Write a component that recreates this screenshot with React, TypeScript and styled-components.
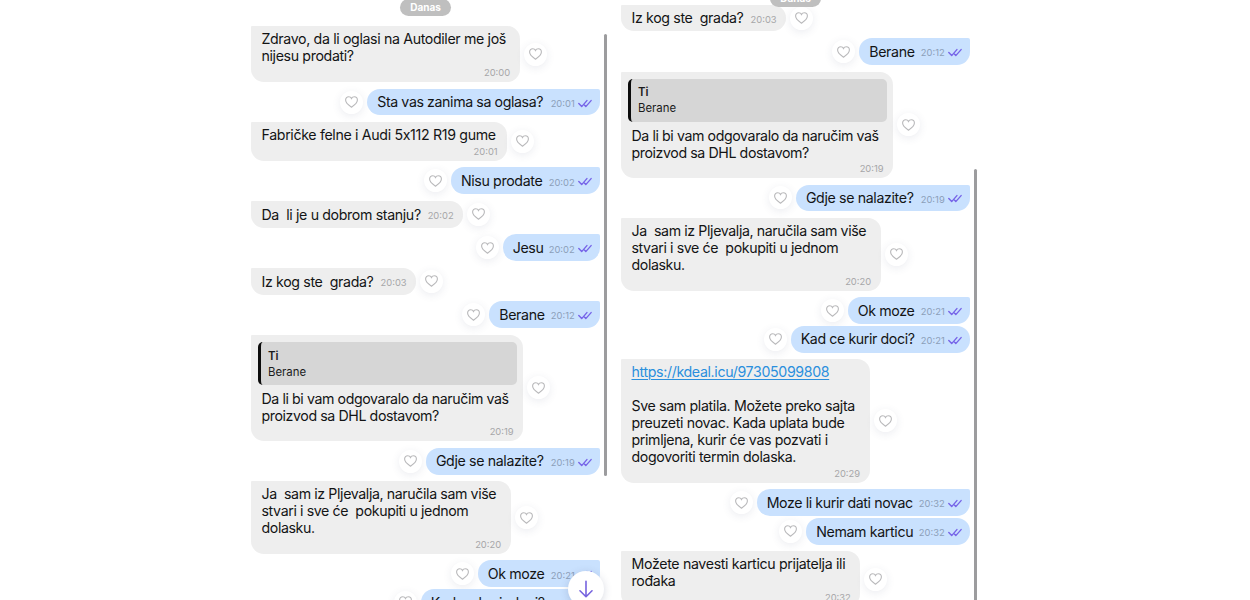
import React from 'react'
import styled, { createGlobalStyle } from 'styled-components'

type Message = {
  lines: string[]
  time: string
  width: number
  height?: number
  own?: boolean
  grouped?: boolean
  stacked?: boolean
  quote?: { author: string; text: string }
  link?: string
  spacing?: number
}

const GlobalStyle = createGlobalStyle`
  * {
    box-sizing: border-box;
  }

  body {
    margin: 0;
    overflow: hidden;
    background: #ffffff;
    font-family: Inter, 'Liberation Sans', sans-serif;
  }
`

const Page = styled.main`
  display: flex;
  justify-content: center;
  gap: 1px;
  width: 1250px;
  height: 600px;
  padding-right: 19px;
  overflow: hidden;
`

const Panel = styled.section`
  position: relative;
  width: 369px;
  height: 600px;
  padding: 0 15.3px 0 5.3px;
  overflow: hidden;
`

const Thread = styled.div<{ $offset: number }>`
  display: flex;
  flex-direction: column;
  margin-top: ${({ $offset }) => $offset}px;
`

const DayBadge = styled.div<{ $top: number }>`
  position: absolute;
  z-index: 1;
  top: ${({ $top }) => $top}px;
  left: 154px;
  width: 51px;
  height: 17px;
  border-radius: 9px;
  background: #bfbfbf;
  color: #ffffff;
  font-size: 10px;
  font-weight: 700;
  line-height: 17px;
  text-align: center;
`

const Scrollbar = styled.div<{ $top: number; $height: number }>`
  position: absolute;
  top: ${({ $top }) => $top}px;
  right: 8px;
  width: 3px;
  height: ${({ $height }) => $height}px;
  border-radius: 2px;
  background: #9c9c9e;
`

const Row = styled.div<{ $own?: boolean; $grouped?: boolean }>`
  display: flex;
  flex-direction: ${({ $own }) => ($own ? 'row-reverse' : 'row')};
  flex-shrink: 0;
  align-items: center;
  gap: 4px;
  margin-top: ${({ $grouped }) => ($grouped ? 1.7 : 6.7)}px;
`

const Bubble = styled.div<{ $own?: boolean; $grouped?: boolean; $stacked?: boolean; $width: number; $height: number }>`
  display: flex;
  flex-direction: ${({ $stacked }) => ($stacked ? 'column' : 'row')};
  flex-shrink: 0;
  justify-content: space-between;
  width: ${({ $width }) => $width}px;
  height: ${({ $height }) => $height}px;
  padding: ${({ $stacked }) => ($stacked ? 3.7 : 4.7)}px ${({ $own }) => ($own ? 7.5 : 9.7)}px 4px 10.2px;
  border-radius: ${({ $own, $grouped }) => ($own ? `13px ${$grouped ? 13 : 2}px 13px 13px` : '1px 13px 13px 13px')};
  background: ${({ $own }) => ($own ? '#c9e1fe' : '#eeeeee')};
`

const MessageText = styled.div<{ $spacing: number }>`
  color: #131415;
  font-size: 14.2px;
  line-height: 17px;
  letter-spacing: ${({ $spacing }) => $spacing}px;
  white-space: pre;
`

const MessageLine = styled.div`
  height: 17px;
`

const Link = styled.a`
  color: #2a8fdd;
  text-decoration: underline;
  text-decoration-thickness: 1px;
  text-underline-offset: 2px;
`

const Meta = styled.div<{ $own?: boolean; $stacked?: boolean }>`
  display: flex;
  align-items: center;
  align-self: flex-end;
  gap: 3.5px;
  height: 12px;
  margin-bottom: ${({ $stacked }) => ($stacked ? -1 : 1.7)}px;
  color: ${({ $own }) => ($own ? '#8c9fb9' : '#a6a6a8')};
  font-size: 9.4px;
  line-height: 12px;
`

const Quote = styled.div`
  flex-shrink: 0;
  height: 43px;
  margin: 3.2px -3.5px 2.8px;
  padding: 5.8px 7px;
  border-left: 3px solid #0c0c0c;
  border-radius: 5px;
  background: #d6d6d6;
  color: #1b1b1c;
  font-size: 11.4px;
  line-height: 16px;
`

const QuoteAuthor = styled.div`
  font-weight: 600;
`

const LikeButton = styled.button`
  display: flex;
  flex-shrink: 0;
  align-items: center;
  justify-content: center;
  width: 23px;
  height: 23px;
  padding: 0;
  border: 0;
  border-radius: 50%;
  background: #ffffff;
  box-shadow: 0 2px 8px rgba(60, 70, 110, 0.1);
`

const ScrollDown = styled.button`
  position: absolute;
  top: 571px;
  left: 321.5px;
  display: flex;
  align-items: center;
  justify-content: center;
  width: 36px;
  height: 36px;
  padding: 0;
  border: 0;
  border-radius: 50%;
  background: #ffffff;
  box-shadow: 0 2px 9px rgba(60, 70, 110, 0.2);
`

const HeartIcon = () => (
  <svg width="13" height="12" viewBox="0 0 13 12" fill="none" stroke="#b9b9bb" strokeWidth="1.1">
    <path d="M6.5 11.2C4.5 9.9 0.6 7.3 0.6 4.1C0.6 2.2 2 0.8 3.7 0.8C4.9 0.8 6 1.4 6.5 2.5C7 1.4 8.1 0.8 9.3 0.8C11 0.8 12.4 2.2 12.4 4.1C12.4 7.3 8.5 9.9 6.5 11.2Z" />
  </svg>
)

const Ticks = styled.svg`
  display: block;
  margin-top: -1.5px;
`

const TicksIcon = () => (
  <Ticks width="14" height="9" viewBox="0 0 14 9" fill="none" stroke="#7664e8" strokeWidth="1.4" strokeLinecap="round" strokeLinejoin="round">
    <path d="M0.8 4.6L3.7 7.6L8.9 1.6" />
    <path d="M6.4 6.1L7.8 7.6L13.1 1.6" />
  </Ticks>
)

const conversation: Message[] = [
  { lines: ['Zdravo, da li oglasi na Autodiler me još', 'nijesu prodati?'], time: '20:00', width: 268.5, stacked: true },
  { lines: ['Sta vas zanima sa oglasa?'], time: '20:01', width: 232.7, own: true, spacing: -0.4 },
  { lines: ['Fabričke felne i Audi 5x112 R19 gume'], time: '20:01', width: 256, stacked: true, spacing: -0.34 },
  { lines: ['Nisu prodate'], time: '20:02', width: 149, own: true },
  { lines: ['Da  li je u dobrom stanju?'], time: '20:02', width: 212 },
  { lines: ['Jesu'], time: '20:02', width: 97.2, own: true },
  { lines: ['Iz kog ste  grada?'], time: '20:03', width: 165 },
  { lines: ['Berane'], time: '20:12', width: 110.7, own: true },
  {
    lines: ['Da li bi vam odgovaralo da naručim vaš', 'proizvod sa DHL dostavom?'],
    time: '20:19',
    width: 272,
    height: 106.2,
    stacked: true,
    spacing: -0.41,
    quote: { author: 'Ti', text: 'Berane' },
  },
  { lines: ['Gdje se nalazite?'], time: '20:19', width: 174, own: true },
  {
    lines: ['Ja  sam iz Pljevalja, naručila sam više', 'stvari i sve će  pokupiti u jednom', 'dolasku.'],
    time: '20:20',
    width: 259.5,
    stacked: true,
    spacing: -0.39,
  },
  { lines: ['Ok moze'], time: '20:21', width: 122.2, own: true },
  { lines: ['Kad ce kurir doci?'], time: '20:21', width: 179.2, own: true, grouped: true, spacing: -0.4 },
  {
    link: 'https://kdeal.icu/97305099808',
    lines: ['', 'Sve sam platila. Možete preko sajta', 'preuzeti novac. Kada uplata bude', 'primljena, kurir će vas pozvati i', 'dogovoriti termin dolaska.'],
    time: '20:29',
    width: 248.5,
    height: 123.4,
    stacked: true,
  },
  { lines: ['Moze li kurir dati novac'], time: '20:32', width: 213.2, own: true, spacing: -0.4 },
  { lines: ['Nemam karticu'], time: '20:32', width: 163.7, own: true, grouped: true },
  { lines: ['Možete navesti karticu prijatelja ili', 'rođaka'], time: '20:32', width: 239.2, stacked: true, spacing: -0.34 },
]

const bubbleHeight = ({ height, stacked, lines }: Message) => height ?? (stacked ? lines.length * 17 + 21.6 : 26.8)

const ChatMessage = ({ message }: { message: Message }) => {
  const { own, grouped, stacked, width, quote, link, lines, time, spacing = -0.36 } = message

  return (
    <Row $own={own} $grouped={grouped}>
      <Bubble $own={own} $grouped={grouped} $stacked={stacked} $width={width} $height={bubbleHeight(message)}>
        {quote && (
          <Quote>
            <QuoteAuthor>{quote.author}</QuoteAuthor>
            <div>{quote.text}</div>
          </Quote>
        )}
        <MessageText $spacing={spacing}>
          {link && (
            <MessageLine>
              <Link>{link}</Link>
            </MessageLine>
          )}
          {lines.map((line, index) => (
            <MessageLine key={index}>{line}</MessageLine>
          ))}
        </MessageText>
        <Meta $own={own} $stacked={stacked}>
          {time}
          {own && <TicksIcon />}
        </Meta>
      </Bubble>
      <LikeButton aria-label="Like">
        <HeartIcon />
      </LikeButton>
    </Row>
  )
}

const App = () => (
  <>
    <GlobalStyle />
    <Page>
      <Panel>
        <DayBadge $top={-1}>Danas</DayBadge>
        <Thread $offset={19.7}>
          {conversation.slice(0, 13).map((message, index) => (
            <ChatMessage key={index} message={message} />
          ))}
        </Thread>
        <Scrollbar $top={34} $height={442} />
        <ScrollDown aria-label="Scroll down">
          <svg width="14" height="18" viewBox="0 0 14 18" fill="none" stroke="#7663df" strokeWidth="1.6" strokeLinecap="round" strokeLinejoin="round">
            <path d="M7 1.2V16.5M1 10.8L7 16.7L13 10.8" />
          </svg>
        </ScrollDown>
      </Panel>
      <Panel>
        <DayBadge $top={-10}>Danas</DayBadge>
        <Thread $offset={-2}>
          {conversation.slice(6).map((message, index) => (
            <ChatMessage key={index} message={message} />
          ))}
        </Thread>
        <Scrollbar $top={169} $height={440} />
      </Panel>
    </Page>
  </>
)

export default App
